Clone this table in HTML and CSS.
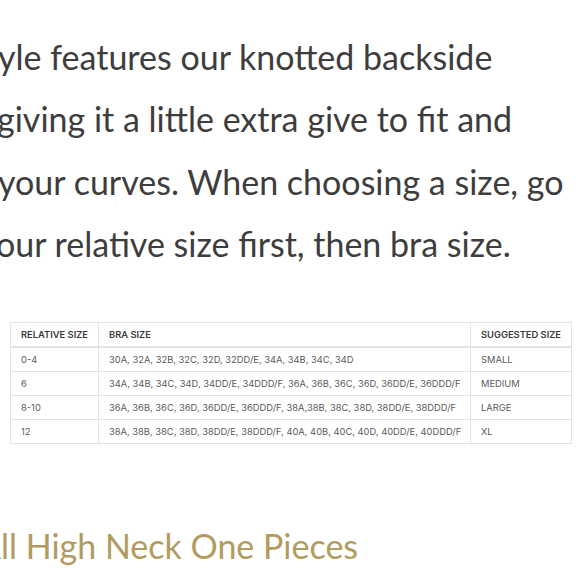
FILE: index.html
```html
<!DOCTYPE html>
<html>
<head>
<meta charset="utf-8">
<link rel="stylesheet" href="styles.css">
</head>
<body>
<div class="page">
  <p class="intro">
    <span class="line l1">yle features our knotted backside</span>
    <span class="line l2">giving it a little extra give to fit and</span>
    <span class="line l3">your curves. When choosing a size, go</span>
    <span class="line l4">our relative size first, then bra size.</span>
  </p>
  <table class="sizes">
    <colgroup><col class="c1"><col class="c2"><col class="c3"></colgroup>
    <thead>
      <tr><th>Relative Size</th><th>Bra Size</th><th>Suggested Size</th></tr>
    </thead>
    <tbody>
      <tr><td>0-4</td><td>30A, 32A, 32B, 32C, 32D, 32DD/E, 34A, 34B, 34C, 34D</td><td>SMALL</td></tr>
      <tr><td>6</td><td>34A, 34B, 34C, 34D, 34DD/E, 34DDD/F, 36A, 36B, 36C, 36D, 36DD/E, 36DDD/F</td><td>MEDIUM</td></tr>
      <tr><td>8-10</td><td>36A, 36B, 36C, 36D, 36DD/E, 36DDD/F, 38A,38B, 38C, 38D, 38DD/E, 38DDD/F</td><td>LARGE</td></tr>
      <tr><td>12</td><td>38A, 38B, 38C, 38D, 38DD/E, 38DDD/F, 40A, 40B, 40C, 40D, 40DD/E, 40DDD/F</td><td>XL</td></tr>
    </tbody>
  </table>
  <h2 class="more">All High Neck One Pieces</h2>
</div>
</body>
</html>
```
FILE: styles.css
```css
html, body {
  margin: 0;
  padding: 0;
  background: #ffffff;
}
.page {
  width: 580px;
  height: 580px;
  overflow: hidden;
}
.intro {
  margin: 0;
  padding-top: 26px;
  font-family: Lato, "Open Sans", sans-serif;
  font-size: 34px;
  line-height: 62.3px;
  color: #3d3d3d;
}
.line {
  display: block;
  white-space: nowrap;
}
.l1 { margin-left: -2px; }
.l2 { margin-left: -3px; }
.l3 { margin-left: -2px; }
.l4 { margin-left: -4px; }
.sizes {
  margin: 47px 0 0 10px;
  width: 561px;
  table-layout: fixed;
  border-collapse: collapse;
  font-family: Inter, "Liberation Sans", sans-serif;
  font-size: 9.35px;
  color: #5a5a5a;
}
.c1 { width: 88px; }
.c2 { width: 372px; }
.c3 { width: 101px; }
.sizes th, .sizes td {
  border: 1px solid #e3e3e3;
  text-align: left;
  padding: 0 0 0 10px;
  height: 23px;
  white-space: nowrap;
  overflow: hidden;
}
.sizes th {
  font-weight: 600;
  text-transform: uppercase;
  color: #3a3a3a;
  border-bottom-width: 2px;
}
.more {
  margin: 80px 0 0 -22px;
  font-family: Lato, sans-serif;
  font-weight: 400;
  font-size: 34px;
  line-height: 44px;
  color: #b19b5f;
  white-space: nowrap;
}
```
